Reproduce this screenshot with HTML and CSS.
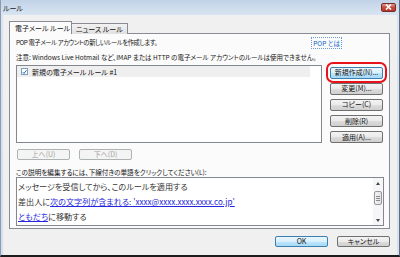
FILE: index.html
```html
<!DOCTYPE html>
<html lang="ja">
<head>
    <meta charset="UTF-8">
    <title>ルール</title>
    <link rel="stylesheet" href="styles.css">
</head>
<body>
<div class="window">
    <div class="titlebar">
        <span class="title">ルール</span>
        <span class="close-btn">
            <svg width="7" height="6" viewBox="0 0 7 6"><path d="M1 0.5 L6 5.5 M6 0.5 L1 5.5" stroke="#fff" stroke-width="1.6" fill="none"/></svg>
        </span>
    </div>
    <div class="client">
        <div class="tabs">
            <div class="tab active">電子メール ルール</div>
            <div class="tab">ニュース ルール</div>
        </div>
        <div class="panel">
            <div class="intro">
                <span class="intro-text">POP 電子メール アカウントの新しいルールを作成します。</span>
                <a class="help-link" href="#">POP とは</a>
            </div>
            <div class="note">注意: Windows Live Hotmail など、IMAP または HTTP の電子メール アカウントのルールは使用できません。</div>
            <div class="rules">
                <div class="listbox">
                    <div class="rule-item">
                        <span class="check">
                            <svg width="6" height="6" viewBox="0 0 6 6"><path d="M0.8 3.2 L2.4 4.8 L5.3 0.9" stroke="#2b62b4" stroke-width="1.2" fill="none"/></svg>
                        </span>
                        <span>新規の電子メール ルール #1</span>
                    </div>
                </div>
                <div class="side-buttons">
                    <button class="btn hot marked">新規作成(N)...</button>
                    <button class="btn">変更(M)...</button>
                    <button class="btn">コピー(C)</button>
                    <button class="btn">削除(R)</button>
                    <button class="btn">適用(A)...</button>
                </div>
            </div>
            <div class="move-buttons">
                <button class="btn" disabled>上へ(U)</button>
                <button class="btn" disabled>下へ(D)</button>
            </div>
            <div class="desc-label">この説明を編集するには、下線付きの単語をクリックしてください(L):</div>
            <div class="desc">
                <div class="desc-text">
                    <div>メッセージを受信してから、このルールを適用する</div>
                    <div>差出人に<a href="#">次の文字列が含まれる: 'xxxx@xxxx.xxxx.xxxx.co.jp'</a></div>
                    <div><a href="#">ともだち</a>に移動する</div>
                </div>
                <div class="scrollbar">
                    <span class="arrow up"></span>
                    <span class="thumb"></span>
                    <span class="track"></span>
                    <span class="arrow down"></span>
                </div>
            </div>
        </div>
        <div class="footer">
            <button class="btn hot">OK</button>
            <button class="btn">キャンセル</button>
        </div>
    </div>
</div>
</body>
</html>
```

FILE: styles.css
```css
body {
    margin: 0;
    font-family: "Noto Sans CJK JP", "Noto Sans", sans-serif;
    font-size: 7px;
    font-feature-settings: "palt";
    color: #141414;
}
.window {
    width: 400px;
    height: 257px;
    box-sizing: border-box;
    display: flex;
    flex-direction: column;
    background: linear-gradient(#c2d3e8, #d8e4f1 15px, #d4e0ee);
    border-left: 1px solid #8b9cb0;
    border-right: 1px solid #5f6f80;
    border-bottom: 2px solid #1c1c1c;
}
.titlebar {
    height: 15px;
    flex: none;
    display: flex;
    align-items: center;
    justify-content: space-between;
    padding: 0 3px 0 2px;
}
.title {
    font-size: 7px;
    color: #202020;
}
.close-btn {
    width: 15px;
    height: 9px;
    box-sizing: border-box;
    margin-top: -1px;
    display: flex;
    align-items: center;
    justify-content: center;
    border: 1px solid #7a2a25;
    border-radius: 2px;
    background: linear-gradient(#e19a8f, #c9493c 50%, #b8382c);
}
.client {
    flex: 1;
    margin: 0 2px;
    padding: 6px 7px 0 6px;
    background: #f0f0f0;
}
.tabs {
    display: flex;
    align-items: flex-end;
    height: 13px;
    margin-bottom: -1px;
}
.tab {
    height: 10px;
    line-height: 10px;
    padding: 0 4px;
    border: 1px solid #898c95;
    border-bottom: none;
    border-left: none;
    background: linear-gradient(#f2f2f2, #e0e0e0);
}
.tab.active {
    position: relative;
    z-index: 1;
    height: 13px;
    line-height: 13px;
    width: 63px;
    box-sizing: border-box;
    padding: 0 0 0 5px;
    border-left: 1px solid #898c95;
    background: #fbfbfb;
}
.panel {
    display: flex;
    flex-direction: column;
    border: 1px solid #898c95;
    background: #fbfbfb;
    padding: 4px 5px 2px 6px;
}
.intro {
    display: flex;
    justify-content: space-between;
    line-height: 10px;
    height: 10px;
}
.intro-text {
    font-size: 6.3px;
    letter-spacing: -0.4px;
}
.help-link {
    margin-right: 43px;
    padding: 0 1px;
    font-size: 6.5px;
    color: #0b5fc9;
    text-decoration: none;
    outline: 1px dotted #6b9ad8;
}
.note {
    margin-top: 4px;
    line-height: 10px;
    font-size: 6.5px;
    white-space: nowrap;
}
.rules {
    display: flex;
    margin-top: 3px;
    height: 78px;
}
.listbox {
    width: 306px;
    box-sizing: border-box;
    border: 1px solid #828790;
    background: white;
}
.rule-item {
    display: flex;
    align-items: center;
    gap: 4px;
    height: 11px;
    margin-right: 11px;
    padding-left: 4px;
    background: #efefef;
}
.check {
    width: 7px;
    height: 7px;
    box-sizing: border-box;
    display: flex;
    align-items: center;
    justify-content: center;
    border: 1px solid #7f9db9;
    background: white;
}
.side-buttons {
    display: flex;
    flex-direction: column;
    gap: 4.5px;
    margin-left: 8px;
    padding-top: 2px;
}
.btn {
    width: 53px;
    height: 12px;
    box-sizing: border-box;
    padding: 0;
    font-family: inherit;
    font-size: 7px;
    font-feature-settings: "palt";
    line-height: 9px;
    color: #141414;
    border: 1px solid #707070;
    border-radius: 2px;
    background: linear-gradient(#f3f3f3, #ebebeb 50%, #dddddd 50%, #cfcfcf);
}
.btn.hot {
    border-color: #3c7fb1;
    background: linear-gradient(#eaf6fd, #d9f0fc 50%, #bee6fd 50%, #a7d9f5);
}
.btn:disabled {
    color: #a3a3a3;
    border-color: #adb2b5;
    background: #f4f4f4;
}
.marked {
    position: relative;
}
.marked::after {
    content: "";
    position: absolute;
    left: -5px;
    right: -5px;
    top: -6px;
    bottom: -5px;
    border: 2px solid #e8121a;
    border-radius: 7px;
}
.move-buttons {
    display: flex;
    gap: 9px;
    margin-top: 6px;
    margin-left: 1px;
}
.move-buttons .btn {
    height: 11px;
}
.desc-label {
    margin-top: 7px;
    line-height: 10px;
    font-size: 6.6px;
    white-space: nowrap;
}
.desc {
    display: flex;
    height: 49px;
    box-sizing: border-box;
    border: 1px solid #828790;
    background: white;
}
.desc-text {
    flex: 1;
    padding: 1px 1px 0;
    font-size: 8.1px;
    line-height: 15px;
    color: #333;
    white-space: nowrap;
}
.desc-text a {
    color: #2626dc;
}
.scrollbar {
    width: 10px;
    display: flex;
    flex-direction: column;
    align-items: center;
    background: #f6f6f6;
}
.arrow {
    height: 10px;
    display: flex;
    align-items: center;
    justify-content: center;
}
.arrow::before {
    content: "";
    border-left: 2.5px solid transparent;
    border-right: 2.5px solid transparent;
}
.arrow.up::before {
    border-bottom: 3px solid #444;
}
.arrow.down::before {
    border-top: 3px solid #444;
}
.thumb {
    width: 8px;
    height: 14px;
    box-sizing: border-box;
    margin-top: 3px;
    display: flex;
    align-items: center;
    justify-content: center;
    border: 1px solid #979797;
    border-radius: 2px;
    background: linear-gradient(90deg, #f2f2f2, #e2e2e2);
}
.thumb::before {
    content: "";
    width: 4px;
    height: 5px;
    background: repeating-linear-gradient(#8a8a8a 0 1px, transparent 1px 2px);
}
.track {
    flex: 1;
}
.footer {
    display: flex;
    justify-content: flex-end;
    gap: 9px;
    margin-top: 7px;
}
.footer .btn {
    height: 11px;
}
```
